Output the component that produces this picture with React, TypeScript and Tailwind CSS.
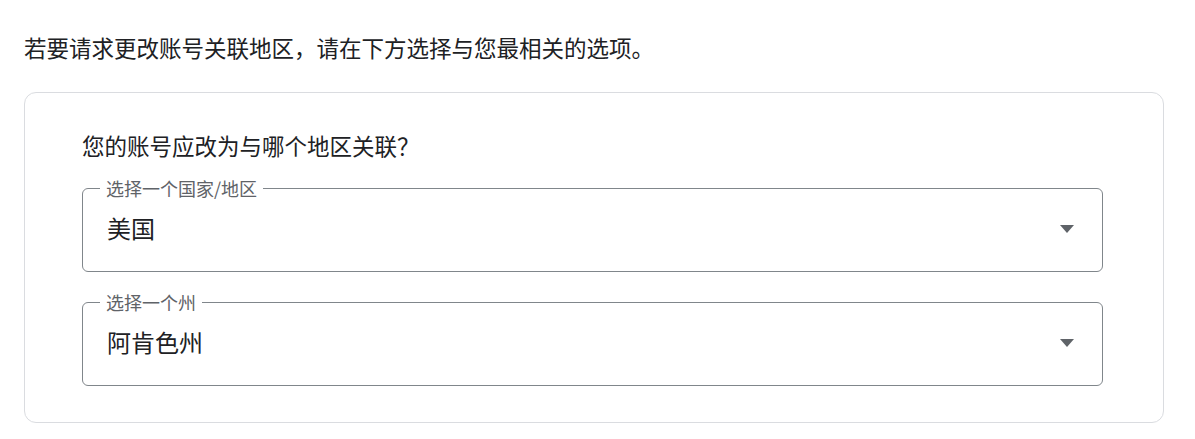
const FONT = { fontFamily: '"Noto Sans CJK SC", "Noto Sans", sans-serif' }

function Caret() {
  return (
    <svg width="16" height="8" viewBox="0 0 16 8" className="shrink-0">
      <path d="M1 0 L15 0 L8 8 Z" fill="#5f6368" />
    </svg>
  )
}

function OutlinedSelect({ label, value }: { label: string; value: string }) {
  return (
    <fieldset className="border border-[#80868b] rounded-[6px] px-[24px]">
      <legend className="ml-[-7px] px-[6px] text-[18px] leading-[22px] text-[#5f6368]">{label}</legend>
      <div className="flex items-center justify-between h-[72px] pb-[14px]">
        <span className="text-[24px] leading-[30px] text-[#202124]">{value}</span>
        <span className="mr-[3px] mt-[1px]"><Caret /></span>
      </div>
    </fieldset>
  )
}

export default function App() {
  return (
    <div style={FONT} className="bg-white min-h-screen pt-[33px] pl-[24px]">
      <p className="text-[22.5px] leading-[28px] text-[#202124]">
        若要请求更改账号关联地区，请在下方选择与您最相关的选项。
      </p>
      <div className="mt-[31px] w-[1140px] border border-[#dadce0] rounded-[12px] pl-[57px] pr-[60px] pt-[38px] pb-[36px]">
        <p className="text-[22.5px] leading-[28px] text-[#202124] mb-[18px]">您的账号应改为与哪个地区关联？</p>
        <div className="flex flex-col gap-[19px]">
          <OutlinedSelect label="选择一个国家/地区" value="美国" />
          <OutlinedSelect label="选择一个州" value="阿肯色州" />
        </div>
      </div>
    </div>
  )
}
